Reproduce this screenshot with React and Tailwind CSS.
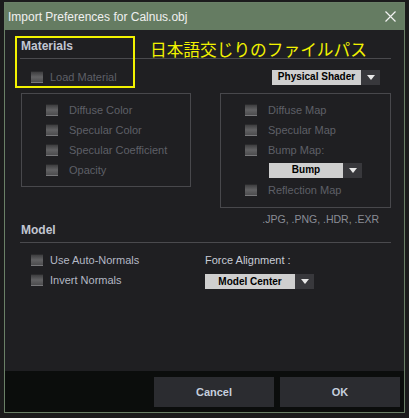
import React from 'react';

const font = { fontFamily: '"Liberation Sans", Arial, sans-serif' };

const Check = () => (
  <div className="w-[12px] h-[12px] shrink-0 border-t border-t-[#2a2a2c] border-b border-b-[#77777a] bg-gradient-to-b from-[#3e3e40] via-[#626264] to-[#4c4c4e]" />
);

const Row = ({ label, gap = 'gap-[11px]', dim = true }) => (
  <div className={`flex items-center h-[20px] ${gap}`}>
    <Check />
    <span className={`text-[11px] leading-[14px] ${dim ? 'text-[#5e5f67]' : 'text-[#b4b8c4]'}`}>{label}</span>
  </div>
);

const Dropdown = ({ label, w }) => (
  <div className="flex h-[15px]">
    <div className={`${w} bg-[#cfcfcf] flex items-center justify-center text-[10px] font-bold text-black leading-none`}>
      {label}
    </div>
    <div className="w-[19px] bg-[#38383c] flex items-center justify-center">
      <svg width="8" height="5" viewBox="0 0 8 5"><path d="M0 0h8L4 5z" fill="#e8e8e8" /></svg>
    </div>
  </div>
);

export default function App() {
  return (
    <div className="w-[409px] h-[418px] bg-[#1b1b1c] pt-[2px] pl-[4px] overflow-hidden" style={font}>
      <div className="relative w-[401px] h-[411px] border border-[#6a8067] flex flex-col bg-[#1f1f22]">
        <div className="h-[27px] bg-[#657c62] flex items-center justify-between pl-[3px] pr-[8px]">
          <span className="text-[12px] text-[#f0f0f0]">Import Preferences for Calnus.obj</span>
          <svg width="11" height="11" viewBox="0 0 11 11">
            <path d="M0.5 0.5l10 10M10.5 0.5l-10 10" stroke="#f2f2f2" strokeWidth="1.2" />
          </svg>
        </div>

        <div className="h-[341px] pt-[10px] pl-[15px] pr-[13px]">
          <div className="border-b border-[#4a4a4e] pb-[6px]">
            <span className="block text-[12px] leading-[12px] font-bold text-[#c2c6d2] pl-[1px]">Materials</span>
          </div>

          <div className="flex items-center justify-between h-[16px] mt-[10px] pl-[11px] pr-[11px]">
            <Row label="Load Material" gap="gap-[7px]" />
            <Dropdown label="Physical Shader" w="w-[89px]" />
          </div>

          <div className="flex justify-between mt-[8px] pl-[1px]">
            <div className="w-[170px] h-[94px] border border-[#48484c] pl-[24px] pt-[6px]">
              <Row label="Diffuse Color" />
              <Row label="Specular Color" />
              <Row label="Specular Coefficient" />
              <Row label="Opacity" />
            </div>
            <div className="w-[171px] h-[115px] border border-[#48484c] pl-[24px] pt-[6px]">
              <Row label="Diffuse Map" />
              <Row label="Specular Map" />
              <Row label="Bump Map:" />
              <div className="h-[20px] flex items-center pl-[24px]">
                <Dropdown label="Bump" w="w-[74px]" />
              </div>
              <Row label="Reflection Map" />
            </div>
          </div>

          <div className="text-right pr-[12px] mt-[5px] text-[10.5px] leading-[12px] text-[#8a8d96]">.JPG, .PNG, .HDR, .EXR</div>

          <div className="border-b border-[#4a4a4e] pb-[6px] -mt-[1px]">
            <span className="block text-[12px] leading-[12px] font-bold text-[#c2c6d2] pl-[1px]">Model</span>
          </div>

          <div className="flex mt-[7px]">
            <div className="w-[185px] pl-[11px]">
              <Row label="Use Auto-Normals" gap="gap-[7px]" dim={false} />
              <Row label="Invert Normals" gap="gap-[7px]" dim={false} />
            </div>
            <div className="pt-[3px]">
              <div className="text-[11px] leading-[14px] text-[#c8ccd6]">Force Alignment :</div>
              <div className="mt-[7px]">
                <Dropdown label="Model Center" w="w-[90px]" />
              </div>
            </div>
          </div>
        </div>

        <div className="flex-1 bg-[#0b0d0c] flex justify-end gap-[6px] pt-[6px] pr-[4px]">
          <button className="w-[120px] h-[30px] bg-[#2b2c30] text-[11px] font-bold text-[#c6cfde]">Cancel</button>
          <button className="w-[120px] h-[30px] bg-[#2b2c30] text-[11px] font-bold text-[#c6cfde]">OK</button>
        </div>

        <div className="absolute left-[10px] top-[33px] w-[120px] h-[52px] border-2 border-[#f2f200]" />
        <div
          className="absolute left-[145px] top-[36px] text-[16.7px] leading-[20px] text-[#f2f200]"
          style={{ fontFamily: '"Noto Sans CJK JP", sans-serif' }}
        >
          日本語交じりのファイルパス
        </div>
      </div>
    </div>
  );
}
